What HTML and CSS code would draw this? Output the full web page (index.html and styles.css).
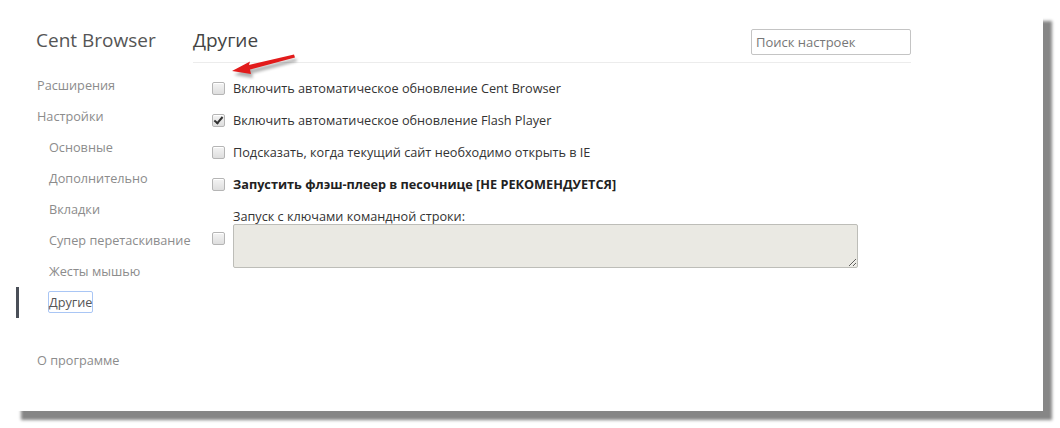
FILE: index.html
```html
<!DOCTYPE html>
<html>
	<head>
		<title>Настройки - Другие</title>
<link rel="stylesheet" href="styles.css">
	</head>
	<body>
		<div class="card">
			<div class="side">
				<h1 class="brand">Cent Browser</h1>
				<ul class="nav">
					<li>Расширения</li>
					<li>Настройки</li>
					<li class="sub">Основные</li>
					<li class="sub">Дополнительно</li>
					<li class="sub">Вкладки</li>
					<li class="sub">Супер перетаскивание</li>
					<li class="sub">Жесты мышью</li>
					<li class="sub active"><span>Другие</span></li>
					<li class="about">О программе</li>
				</ul>
			</div>
			<div class="main">
				<div class="header">
					<h1 class="title">Другие</h1>
					<input class="search" placeholder="Поиск настроек" />
				</div>
				<svg class="arrow" width="80" height="30" viewBox="0 0 80 30">
					<defs>
						<filter id="blur"><feGaussianBlur stdDeviation="1.6" /></filter>
					</defs>
					<path d="M8 21 L26 11.5 L25 15 L70 4.5 L71 7.5 L26 19.5 L27 24 Z" fill="#000" opacity="0.3" filter="url(#blur)" transform="translate(1 3)" />
					<path d="M7 20 L25 10.5 L24 14 L69 3.5 L70 6.5 L25 18.5 L26 23 Z" fill="#e21b1b" />
				</svg>
				<ul class="options">
					<li><input type="checkbox" /> Включить автоматическое обновление Cent Browser</li>
					<li><input type="checkbox" checked /> Включить автоматическое обновление Flash Player</li>
					<li><input type="checkbox" /> Подсказать, когда текущий сайт необходимо открыть в IE</li>
					<li class="strong"><input type="checkbox" /> Запустить флэш-плеер в песочнице [НЕ РЕКОМЕНДУЕТСЯ]</li>
				</ul>
				<div class="cmd">
					<input type="checkbox" />
					<div class="cmd-box">
						<div class="cmd-label">Запуск с ключами командной строки:</div>
						<textarea></textarea>
					</div>
				</div>
			</div>
		</div>
	</body>
</html>
```

FILE: styles.css
```css
html { background: #fff; }
body {
	margin: 0;
	padding-bottom: 17px;
	font-family: "Open Sans", "Noto Sans", sans-serif;
	font-size: 12.7px;
	color: #333;
}

.card {
	width: 1043px;
	height: 411px;
	background: #fff;
	display: flex;
	box-shadow: 15px 15px 3px -6px #868686;
}

.side {
	width: 193px;
	padding-top: 28px;
	box-sizing: border-box;
}
.brand {
	margin: 0 0 18px 36px;
	font-size: 19px;
	font-weight: normal;
	line-height: 24px;
	color: #555;
	white-space: nowrap;
}
.nav { list-style: none; margin: 0; padding: 0; }
.nav li {
	line-height: 31px;
	height: 31px;
	padding-left: 37px;
	color: #8c8c8c;
	white-space: nowrap;
}
.nav li.sub {
	margin-left: 16px;
	padding-left: 30px;
	border-left: 3px solid transparent;
}
.nav li.active { border-left-color: #4a4f58; }
.nav li.active span {
	color: #555;
	padding: 1px 0 1px 0;
	margin-left: -1px;
	border: 1px solid #a9c6f5;
	border-radius: 2px;
}
.nav li.about { margin-top: 27px; }

.main {
	width: 718px;
	position: relative;
}
.header {
	display: flex;
	justify-content: space-between;
	align-items: flex-start;
	height: 63px;
	padding-top: 28px;
	box-sizing: border-box;
	border-bottom: 1px solid #ececec;
}
.title {
	margin: 0;
	font-size: 19px;
	font-weight: normal;
	line-height: 24px;
	color: #444;
}
.search {
	width: 160px;
	height: 26px;
	margin-top: 1px;
	box-sizing: border-box;
	border: 1px solid #c4c4c4;
	border-radius: 2px;
	padding: 0 4px;
	font-family: inherit;
	font-size: 13px;
}
.search::placeholder { color: #777; }

.arrow {
	position: absolute;
	left: 32px;
	top: 51px;
}

.options { list-style: none; margin: 9px 0 0; padding: 0 0 0 19px; }
.options li {
	display: flex;
	align-items: center;
	height: 32px;
	gap: 8px;
}
.options li.strong { font-weight: bold; color: #222; }

input[type=checkbox] {
	appearance: none;
	width: 13px;
	height: 13px;
	margin: 0;
	flex: none;
	border: 1px solid #b5b5b5;
	border-radius: 2px;
	background: linear-gradient(#f4f4f4, #dedede);
	box-shadow: inset 0 1px 0 #fff;
	position: relative;
}
input[type=checkbox]:checked::after {
	content: "";
	position: absolute;
	left: 3px;
	top: 0;
	width: 3px;
	height: 7px;
	border: solid #333;
	border-width: 0 2.5px 2.5px 0;
	transform: rotate(40deg);
}

.cmd {
	display: flex;
	align-items: center;
	gap: 8px;
	margin-top: 8px;
	padding-left: 19px;
}
.cmd-label { line-height: 16px; }
.cmd-box textarea {
	display: block;
	width: 625px;
	height: 44px;
	box-sizing: border-box;
	border: 1px solid #bdbdb8;
	border-radius: 2px;
	background: #eae9e3;
	margin: 0;
}
```
